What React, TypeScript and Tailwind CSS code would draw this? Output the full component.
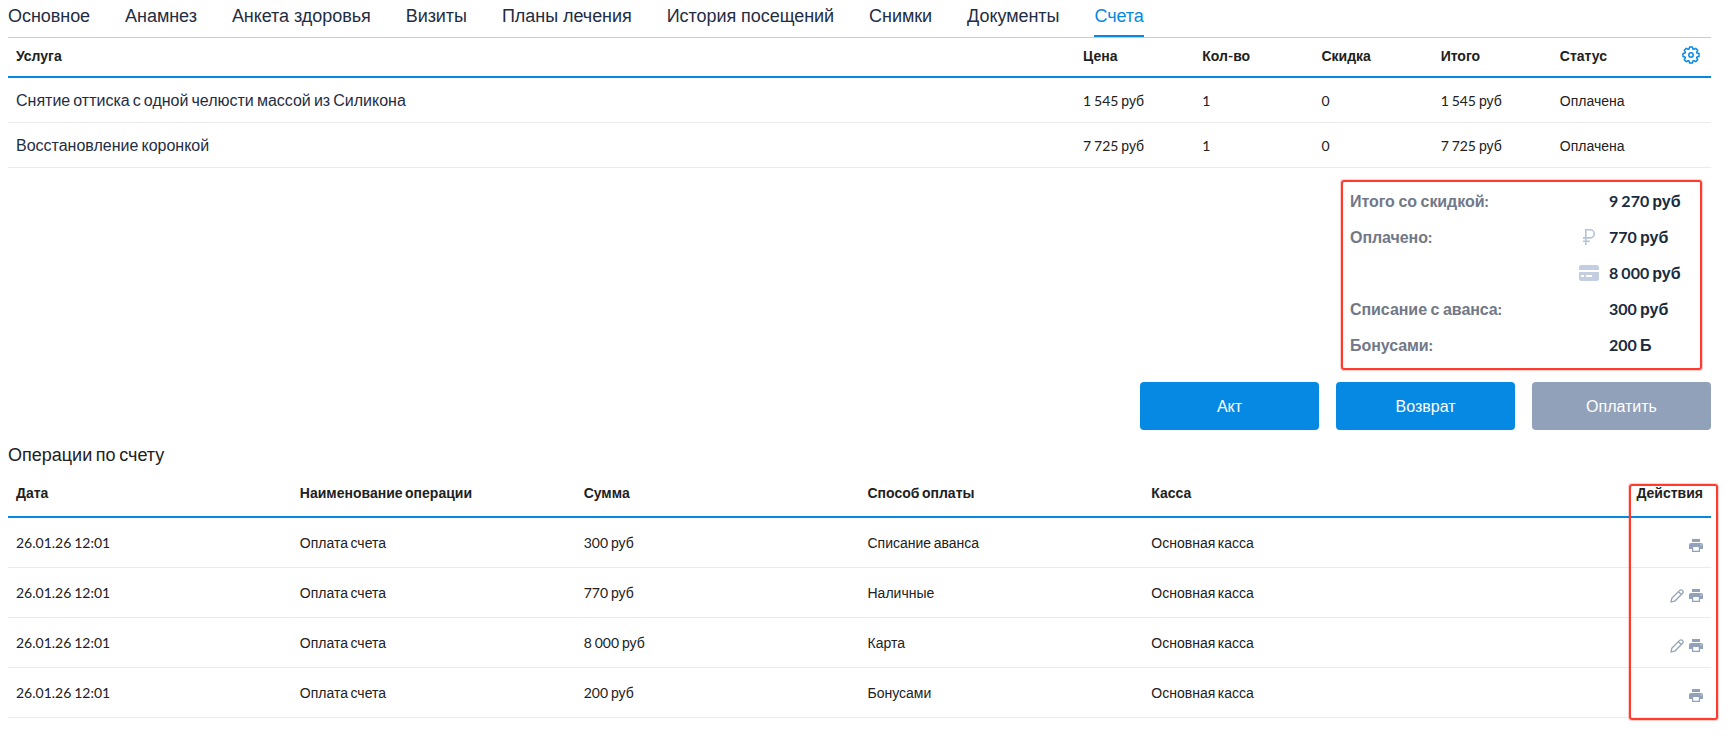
import React, { useState } from 'react';

const tabs = [
  'Основное',
  'Анамнез',
  'Анкета здоровья',
  'Визиты',
  'Планы лечения',
  'История посещений',
  'Снимки',
  'Документы',
  'Счета'
];

const services = [
  { name: 'Снятие оттиска с одной челюсти массой из Силикона', price: '1 545 руб', count: '1', discount: '0', total: '1 545 руб', status: 'Оплачена' },
  { name: 'Восстановление коронкой', price: '7 725 руб', count: '1', discount: '0', total: '7 725 руб', status: 'Оплачена' }
];

const summary = [
  { label: 'Итого со скидкой:', icon: null, value: '9 270 руб' },
  { label: 'Оплачено:', icon: 'ruble', value: '770 руб' },
  { label: '', icon: 'card', value: '8 000 руб' },
  { label: 'Списание с аванса:', icon: null, value: '300 руб' },
  { label: 'Бонусами:', icon: null, value: '200 Б' }
];

const operations = [
  { date: '26.01.26 12:01', name: 'Оплата счета', sum: '300 руб', method: 'Списание аванса', desk: 'Основная касса', editable: false },
  { date: '26.01.26 12:01', name: 'Оплата счета', sum: '770 руб', method: 'Наличные', desk: 'Основная касса', editable: true },
  { date: '26.01.26 12:01', name: 'Оплата счета', sum: '8 000 руб', method: 'Карта', desk: 'Основная касса', editable: true },
  { date: '26.01.26 12:01', name: 'Оплата счета', sum: '200 руб', method: 'Бонусами', desk: 'Основная касса', editable: false }
];

// Digits and punctuation are set in Lato, Cyrillic stays in the base font
const Mixed = ({ text }: { text: string }) => (
  <>
    {text.split(/([\d.:\-][\d.:\- ]*)/).map((part, index) =>
      index % 2 === 1 ? (
        <span key={index} className="font-['Lato',sans-serif] [word-spacing:-0.05em]">{part}</span>
      ) : (
        part
      )
    )}
  </>
);

const GearIcon = () => (
  <svg className="w-[18px] h-[18px]" viewBox="0 0 18 18" fill="none" stroke="#0589e2" strokeWidth="1.5" strokeLinejoin="round">
    <path d="M7.6 1h2.8l.5 2 1 .4 1.8-1.1 2 2-1.1 1.8.4 1 2 .5v2.8l-2 .5-.4 1 1.1 1.8-2 2-1.8-1.1-1 .4-.5 2H7.6l-.5-2-1-.4-1.8 1.1-2-2 1.1-1.8-.4-1-2-.5V7.6l2-.5.4-1-1.1-1.8 2-2 1.8 1.1 1-.4z" />
    <circle cx="9" cy="9" r="2.2" />
  </svg>
);

const RubleIcon = () => (
  <svg className="w-3 h-4" viewBox="0 0 12 16" fill="none" stroke="#b4c3d7" strokeWidth="1.6">
    <path d="M2.8 16V.8h4.400a4.050 4.050 0 0 1 0 8.100H0M0 12.300h6.800" />
  </svg>
);

const CardIcon = () => (
  <svg className="w-5 h-4" viewBox="0 0 20 16" fill="#c3cfe0">
    <path d="M2.5 0h15A2.5 2.5 0 0 1 20 2.5V5H0V2.5A2.5 2.5 0 0 1 2.5 0z" />
    <path fillRule="evenodd" d="M0 7h20v6.5a2.5 2.5 0 0 1-2.5 2.5h-15A2.5 2.5 0 0 1 0 13.500zM2 10v2h3v-2zM7 10v2h6v-2z" />
  </svg>
);

const PencilIcon = () => (
  <svg className="w-[14px] h-[14px]" viewBox="0 0 14 14" fill="none" stroke="#91a1b9" strokeWidth="1.25" strokeLinejoin="round">
    <path d="M1 13l.8-3.700 7.900-7.900a1.900 1.900 0 0 1 2.700 0l.2.200a1.900 1.900 0 0 1 0 2.700l-7.900 7.900zM8.500 2.700l2.800 2.800" />
  </svg>
);

const PrinterIcon = () => (
  <svg className="w-[14px] h-[13px]" viewBox="0 0 14 13" fill="#91a1b9">
    <path d="M3 0h8v3H3z" />
    <path fillRule="evenodd" d="M2 4h10a2 2 0 0 1 2 2v4h-3v3H3v-3H0V6a2 2 0 0 1 2-2zM4.200 8v3.800h5.600V8zM11.500 5.500v1h1v-1z" />
  </svg>
);

const App = () => {
  const [activeTab, setActiveTab] = useState('Счета');

  return (
    <div className="relative w-[1730px] h-[746px] overflow-hidden bg-white pl-2 pr-[19px] font-['Liberation_Sans',Arial,sans-serif] text-[#212121] [word-spacing:-0.085em]">
      {/* Tabs */}
      <nav className="flex h-[38px] gap-[35px] border-b border-[#c1cce0] text-lg tracking-[-0.05px] text-[#1f2d43]">
        {tabs.map((tab) => (
          <button
            key={tab}
            onClick={() => setActiveTab(tab)}
            className={`h-[37px] pb-[2px] border-b-2 whitespace-nowrap leading-[29px] ${
              tab === activeTab ? 'border-[#0589e2] text-[#0589e2]' : 'border-transparent'
            }`}
          >
            {tab}
          </button>
        ))}
      </nav>

      {/* Services */}
      <div className="text-sm">
        <div className="grid h-10 grid-cols-[1fr_119.2px_119.2px_119.2px_119.2px_119.2px_40px] items-center border-b-2 border-[#0589e2] pb-[2px] font-bold">
          <div className="px-2">Услуга</div>
          <div className="px-2">Цена</div>
          <div className="px-2"><Mixed text="Кол-во" /></div>
          <div className="px-2">Скидка</div>
          <div className="px-2">Итого</div>
          <div className="px-2">Статус</div>
          <button className="flex justify-center pb-[2px]" aria-label="Настройки">
            <GearIcon />
          </button>
        </div>
        {services.map((service) => (
          <div
            key={service.name}
            className="grid h-[45px] grid-cols-[1fr_119.2px_119.2px_119.2px_119.2px_119.2px_40px] items-center border-b border-[#ebebeb]"
          >
            <div className="px-2 pt-[2px] text-base text-[#1f2d43]">{service.name}</div>
            <div className="px-2 pt-px"><Mixed text={service.price} /></div>
            <div className="px-2 pt-px"><Mixed text={service.count} /></div>
            <div className="px-2 pt-px"><Mixed text={service.discount} /></div>
            <div className="px-2 pt-px"><Mixed text={service.total} /></div>
            <div className="px-2 pt-px">{service.status}</div>
            <div />
          </div>
        ))}
      </div>

      {/* Totals */}
      <div className="mt-3 ml-auto mr-[9px] h-[190px] w-[361px] rounded-[3px] border-2 border-[#ff3b30] pt-px pl-[7px] font-bold shadow-[0_0_0_1px_rgba(255,59,48,0.25)]">
        {summary.map((row) => (
          <div key={row.value} className="flex h-9 items-center">
            <div className="w-[229px] tracking-[-0.06px] text-[#717887] [word-spacing:-0.05em]"><Mixed text={row.label} /></div>
            <div className="flex w-5 justify-center">
              {row.icon === 'ruble' && <RubleIcon />}
              {row.icon === 'card' && <CardIcon />}
            </div>
            <div className="pl-[10px] text-[#1a2b40]"><Mixed text={row.value} /></div>
          </div>
        ))}
      </div>

      {/* Buttons */}
      <div className="mt-3 flex justify-end gap-[17px] text-white">
        <button className="h-12 w-[179px] rounded bg-[#0589e2] pt-[2px]">Акт</button>
        <button className="h-12 w-[179px] rounded bg-[#0589e2] pt-[2px]">Возврат</button>
        <button className="h-12 w-[179px] rounded bg-[#91a1b9] pt-[2px]">Оплатить</button>
      </div>

      {/* Operations */}
      <h2 className="mt-3 text-lg leading-[26px]">Операции по счету</h2>
      <div className="text-sm">
        <div className="grid h-[50px] grid-cols-6 items-center border-b-2 border-[#0589e2] pt-px font-bold">
          <div className="px-2">Дата</div>
          <div className="px-2">Наименование операции</div>
          <div className="px-2">Сумма</div>
          <div className="px-2">Способ оплаты</div>
          <div className="px-2">Касса</div>
          <div className="px-2 text-right">Действия</div>
        </div>
        {operations.map((operation) => (
          <div key={operation.method} className="grid h-[50px] grid-cols-6 items-center border-b border-[#ebebeb]">
            <div className="px-2"><Mixed text={operation.date} /></div>
            <div className="px-2">{operation.name}</div>
            <div className="px-2"><Mixed text={operation.sum} /></div>
            <div className="px-2">{operation.method}</div>
            <div className="px-2">{operation.desk}</div>
            <div className="flex items-center justify-end gap-[5px] px-2 pt-[6px]">
              {operation.editable && (
                <button aria-label="Изменить"><PencilIcon /></button>
              )}
              <button aria-label="Печать"><PrinterIcon /></button>
            </div>
          </div>
        ))}
      </div>

      {/* Highlight over the actions column */}
      <div className="pointer-events-none absolute left-[1629px] top-[484px] h-[236px] w-[89px] rounded-[3px] border-2 border-[#ff3b30] shadow-[0_0_0_1px_rgba(255,59,48,0.25)]" />
    </div>
  );
};

export default App;
